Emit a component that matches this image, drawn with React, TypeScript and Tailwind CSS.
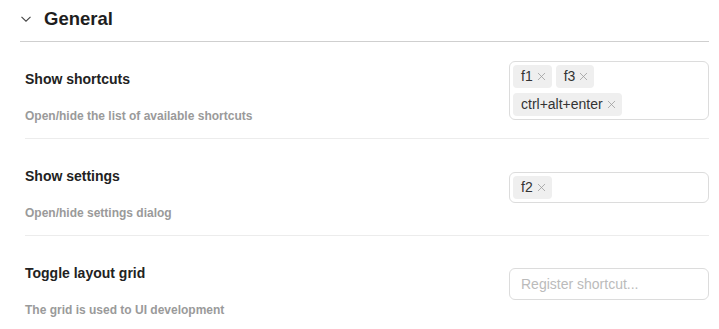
import { X } from 'lucide-react';

type Shortcut = {
  title: string;
  description: string;
  keys: string[];
};

const shortcuts: Shortcut[] = [
  { title: 'Show shortcuts', description: 'Open/hide the list of available shortcuts', keys: ['f1', 'f3', 'ctrl+alt+enter'] },
  { title: 'Show settings', description: 'Open/hide settings dialog', keys: ['f2'] },
  { title: 'Toggle layout grid', description: 'The grid is used to UI development', keys: [] },
];

function KeyChip({ label }: { label: string }) {
  return (
    <span className="inline-flex h-[23px] items-center gap-[2px] rounded-[4px] bg-[#efefef] pl-[8px] pr-[4px] text-[14px] leading-none text-[#333]">
      {label}
      <X className="h-[13px] w-[13px] text-[#999]" strokeWidth={1.4} />
    </span>
  );
}

function ShortcutInput({ keys }: { keys: string[] }) {
  if (keys.length === 0) {
    return (
      <div className="flex h-[32px] w-[200px] items-center rounded-[6px] border border-[#dcdcdc] px-[11px] text-[14px] text-[#bbb]">
        Register shortcut...
      </div>
    );
  }
  return (
    <div className="flex w-[200px] flex-wrap gap-x-[4px] gap-y-[5px] rounded-[6px] border border-[#dcdcdc] p-[3px]">
      {keys.map((k) => (
        <KeyChip key={k} label={k} />
      ))}
    </div>
  );
}

export default function App() {
  return (
    <main className="min-h-screen bg-white pr-[10px] pl-[20px] font-['Liberation_Sans',Arial,sans-serif]">
      <header className="flex h-[42px] items-center border-b border-[#cfcfcf] pb-[3px]">
        <svg viewBox="0 0 10 6" className="ml-[1px] h-[6px] w-[10px] text-[#444]" fill="none" stroke="currentColor" strokeWidth="1.1">
          <path d="M0.5 0.8 L5 5.2 L9.5 0.8" />
        </svg>
        <h2 className="ml-[13px] text-[18.5px] font-bold text-[#1e1e1e]">General</h2>
      </header>

      <div className="pl-[5px]">
        {shortcuts.map((s) => (
          <section key={s.title} className="flex items-center justify-between border-b border-[#ececec] last:border-b-0">
            <div className="flex flex-col gap-[19px] pt-[27px] pb-[14px]">
              <div className="text-[14px] leading-[20px] font-bold text-[#222]">{s.title}</div>
              <div className="text-[12px] leading-[16px] font-bold text-[#9a9a9a]">{s.description}</div>
            </div>
            <ShortcutInput keys={s.keys} />
          </section>
        ))}
      </div>
    </main>
  );
}
